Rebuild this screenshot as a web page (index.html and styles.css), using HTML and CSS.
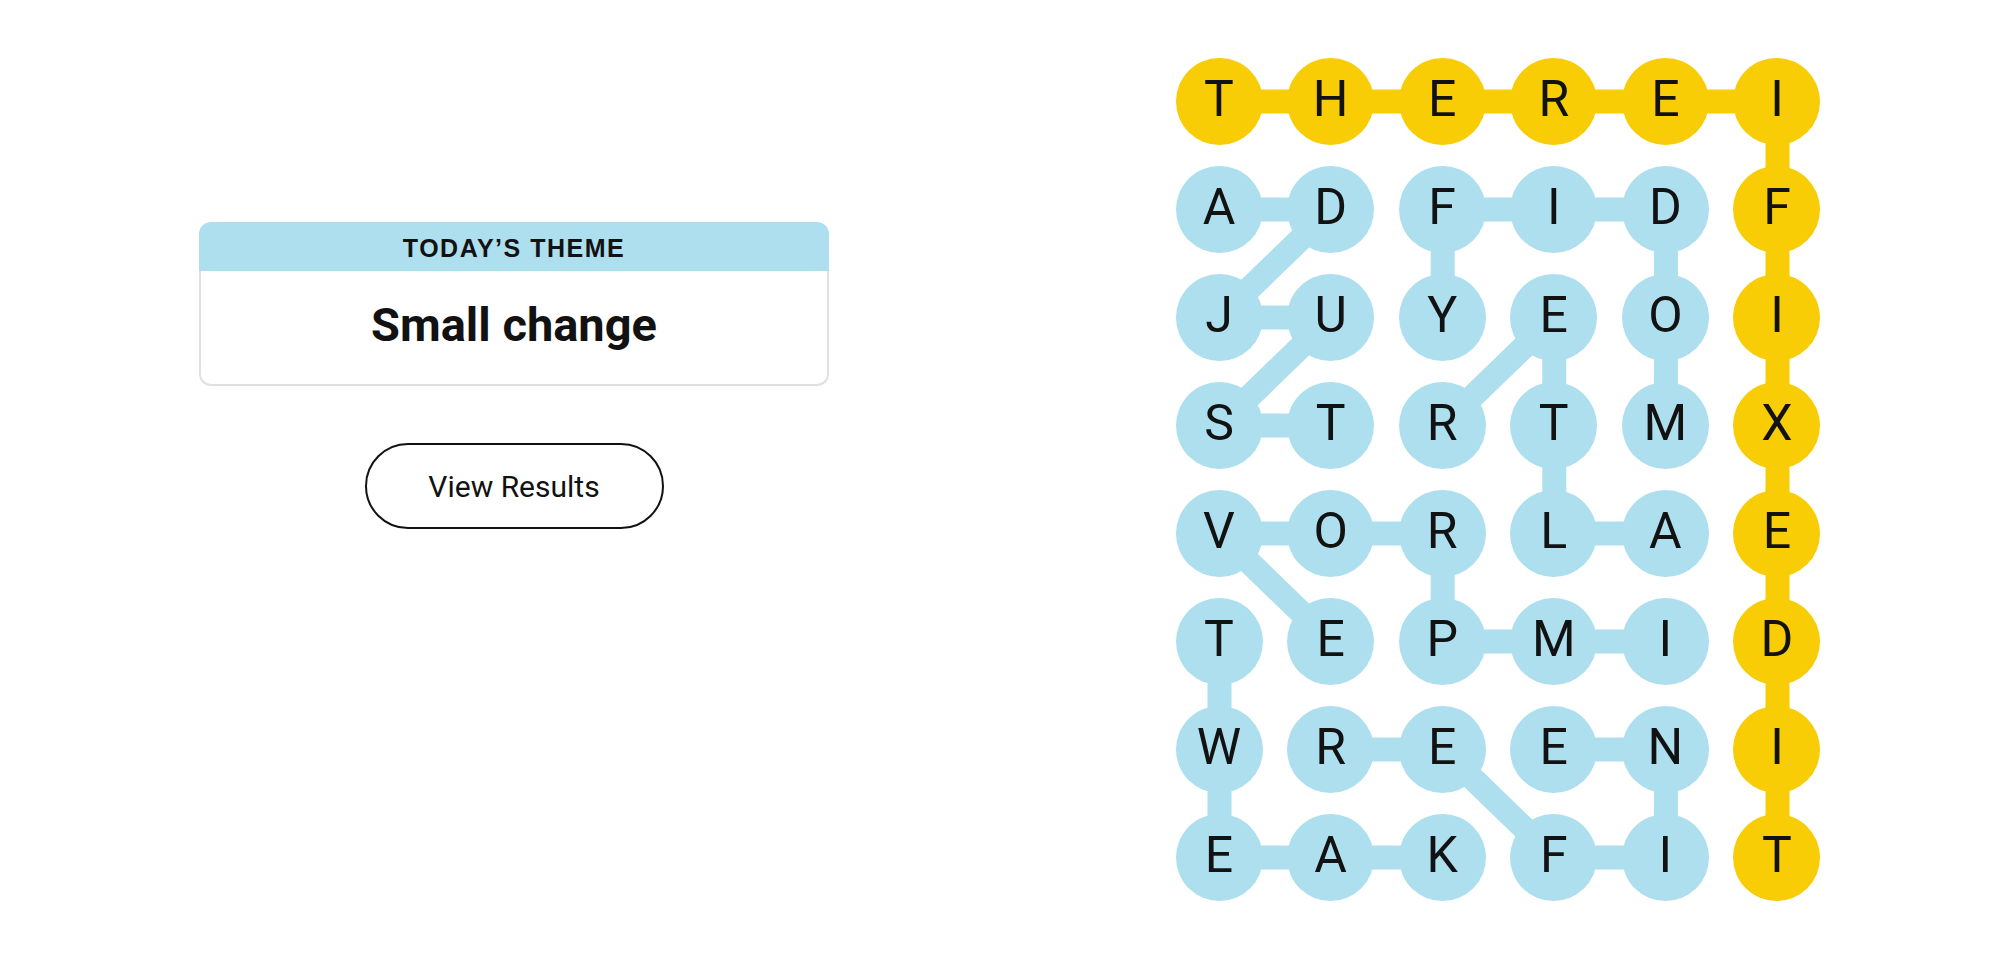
FILE: index.html
```html
<!DOCTYPE html>
<html lang="en">
<head>
<meta charset="utf-8">
<title>Strands</title>
<link rel="stylesheet" href="styles.css">
</head>
<body>
<main class="page">
  <section class="side">
    <div class="theme-card">
      <h2 class="theme-label">TODAY’S THEME</h2>
      <div class="theme-body">
        <h1 class="theme-name">Small change</h1>
      </div>
    </div>
    <button class="results-btn" type="button">View Results</button>
  </section>

  <section class="board-wrap">
    <div class="board">
      <svg class="links" viewBox="0 0 645 843" width="645" height="843" aria-hidden="true">
        <g fill="none" stroke-width="24" stroke-linejoin="round">
          <polyline class="link-span" points="43.5,43.5 601.5,43.5 601.5,799.5"/>
          <polyline class="link-found" points="43.5,151.5 155.1,151.5 43.5,259.5 155.1,259.5 43.5,367.5 155.1,367.5"/>
          <polyline class="link-found" points="489.9,367.5 489.9,259.5 489.9,151.5 378.3,151.5 266.7,151.5 266.7,259.5"/>
          <polyline class="link-found" points="489.9,475.5 378.3,475.5 378.3,367.5 378.3,259.5 266.7,367.5"/>
          <polyline class="link-found" points="489.9,583.5 378.3,583.5 266.7,583.5 266.7,475.5 155.1,475.5 43.5,475.5 155.1,583.5"/>
          <polyline class="link-found" points="43.5,583.5 43.5,691.5 43.5,799.5 155.1,799.5 266.7,799.5"/>
          <polyline class="link-found" points="155.1,691.5 266.7,691.5 378.3,799.5 489.9,799.5 489.9,691.5 378.3,691.5"/>
        </g>
      </svg>

      <div class="cell span">T</div><div class="cell span">H</div><div class="cell span">E</div><div class="cell span">R</div><div class="cell span">E</div><div class="cell span">I</div>
      <div class="cell found">A</div><div class="cell found">D</div><div class="cell found">F</div><div class="cell found">I</div><div class="cell found">D</div><div class="cell span">F</div>
      <div class="cell found">J</div><div class="cell found">U</div><div class="cell found">Y</div><div class="cell found">E</div><div class="cell found">O</div><div class="cell span">I</div>
      <div class="cell found">S</div><div class="cell found">T</div><div class="cell found">R</div><div class="cell found">T</div><div class="cell found">M</div><div class="cell span">X</div>
      <div class="cell found">V</div><div class="cell found">O</div><div class="cell found">R</div><div class="cell found">L</div><div class="cell found">A</div><div class="cell span">E</div>
      <div class="cell found">T</div><div class="cell found">E</div><div class="cell found">P</div><div class="cell found">M</div><div class="cell found">I</div><div class="cell span">D</div>
      <div class="cell found">W</div><div class="cell found">R</div><div class="cell found">E</div><div class="cell found">E</div><div class="cell found">N</div><div class="cell span">I</div>
      <div class="cell found">E</div><div class="cell found">A</div><div class="cell found">K</div><div class="cell found">F</div><div class="cell found">I</div><div class="cell span">T</div>
    </div>
  </section>
</main>
</body>
</html>
```

FILE: styles.css
```css
* {
  box-sizing: border-box;
}

html, body {
  margin: 0;
  padding: 0;
  background: #ffffff;
}

body {
  width: 2004px;
  height: 980px;
  overflow: hidden;
  color: #121212;
  font-family: "Roboto", "Liberation Sans", sans-serif;
}

.page {
  display: flex;
  align-items: flex-start;
}

.side {
  width: 1028px;
  padding-top: 222px;
  display: flex;
  flex-direction: column;
  align-items: center;
  gap: 57px;
}

.theme-card {
  width: 630px;
  display: flex;
  flex-direction: column;
}

.theme-label {
  margin: 0;
  height: 49px;
  background: #aedfee;
  border-radius: 12px 12px 0 0;
  display: flex;
  align-items: center;
  justify-content: center;
  padding-top: 3px;
  font-family: "Liberation Sans", Arial, sans-serif;
  font-size: 25px;
  font-weight: 700;
  letter-spacing: 1.5px;
  color: #121212;
}

.theme-body {
  height: 115px;
  border: 2px solid #e0e0e0;
  border-top: none;
  border-radius: 0 0 12px 12px;
  display: flex;
  align-items: center;
  justify-content: center;
  padding-bottom: 6px;
}

.theme-name {
  margin: 0;
  font-family: "Roboto", "Liberation Sans", sans-serif;
  font-size: 47px;
  font-weight: 700;
  line-height: 1;
  color: #121212;
}

.results-btn {
  width: 299px;
  height: 86px;
  border: 2px solid #121212;
  border-radius: 43px;
  background: #ffffff;
  font-family: "Roboto", "Liberation Sans", sans-serif;
  font-size: 30px;
  font-weight: 400;
  color: #121212;
  padding: 0;
  cursor: pointer;
}

.board-wrap {
  padding-top: 57.5px;
  padding-left: 147.5px;
}

.board {
  position: relative;
  display: grid;
  grid-template-columns: repeat(6, 87px);
  grid-auto-rows: 87px;
  column-gap: 24.6px;
  row-gap: 21px;
}

.links {
  position: absolute;
  left: 0;
  top: 0;
  z-index: 0;
}

.link-span {
  stroke: #f8cd05;
}

.link-found {
  stroke: #aedfee;
}

.cell {
  position: relative;
  z-index: 1;
  width: 87px;
  height: 87px;
  border-radius: 50%;
  display: flex;
  align-items: center;
  justify-content: center;
  padding-bottom: 5px;
  font-family: "Roboto", "Liberation Sans", sans-serif;
  font-size: 50px;
  font-weight: 400;
  line-height: 1;
  color: #121212;
}

.cell.span {
  background: #f8cd05;
}

.cell.found {
  background: #aedfee;
}
```
